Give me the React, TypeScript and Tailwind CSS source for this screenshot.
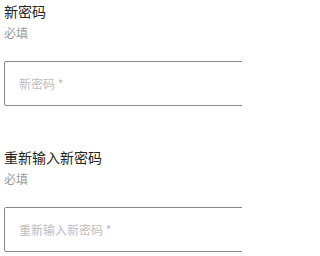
export default function App() {
  const fields = [
    { label: "新密码", placeholder: "新密码 *" },
    { label: "重新输入新密码", placeholder: "重新输入新密码 *" },
  ];
  return (
    <div className="w-[242px] h-[256px] overflow-hidden bg-white pl-1 pt-[1px] font-['Noto_Sans_CJK_SC',sans-serif]">
      {fields.map((f) => (
        <div key={f.label} className="mb-[41px]">
          <div className="text-[14px] leading-[20px] text-[#222]">{f.label}</div>
          <div className="mt-[3px] text-[12px] leading-[18px] text-[#999]">必填</div>
          <div className="mt-[19px] flex h-[45px] w-[300px] items-center rounded-[2px] border border-[#8a8a8a] pl-[14px]">
            <span className="text-[12px] text-[#bdbdbd]">{f.placeholder}</span>
          </div>
        </div>
      ))}
    </div>
  );
}
